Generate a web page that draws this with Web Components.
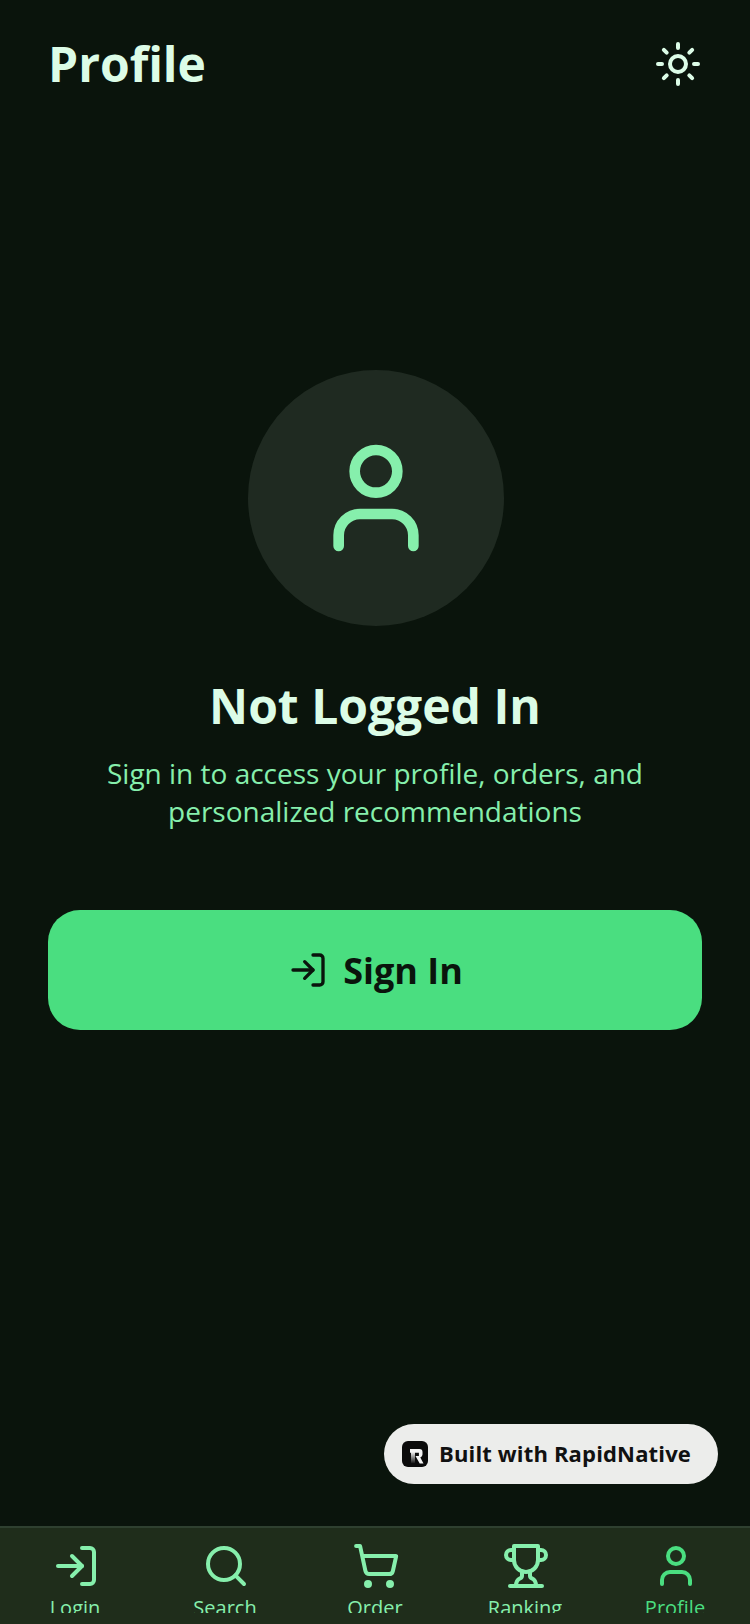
<!DOCTYPE html>
<html lang="en">
<head>
<meta charset="utf-8">
<title>Profile</title>
<style>
  html, body { margin: 0; height: 100%; background: #0a140c; }
  body { font-family: "Open Sans", sans-serif; }
</style>
</head>
<body>
<profile-screen></profile-screen>
<script>
const ICONS = {
  sun: '<circle cx="12" cy="12" r="4"/><path d="M12 2v2M12 20v2M4.93 4.93l1.41 1.41M17.66 17.66l1.41 1.41M2 12h2M20 12h2M6.34 17.66l-1.41 1.41M19.07 4.93l-1.41 1.41"/>',
  user: '<path d="M19 21v-2a4 4 0 0 0-4-4H9a4 4 0 0 0-4 4v2"/><circle cx="12" cy="7" r="4"/>',
  login: '<path d="M15 3h4a2 2 0 0 1 2 2v14a2 2 0 0 1-2 2h-4"/><path d="M10 17l5-5-5-5"/><path d="M15 12H3"/>',
  search: '<circle cx="11" cy="11" r="8"/><path d="M21 21l-4.3-4.3"/>',
  cart: '<circle cx="8" cy="21" r="1"/><circle cx="19" cy="21" r="1"/><path d="M2.05 2.05h2l2.66 12.42a2 2 0 0 0 2 1.58h9.78a2 2 0 0 0 1.95-1.57l1.65-7.43H5.12"/>',
  trophy: '<path d="M6 9H4.5a2.5 2.5 0 0 1 0-5H6"/><path d="M18 9h1.5a2.5 2.5 0 0 0 0-5H18"/><path d="M4 22h16"/><path d="M10 14.66V17c0 .55-.47.98-.97 1.21C7.85 18.75 7 20.24 7 22"/><path d="M14 14.66V17c0 .55.47.98.97 1.21C16.15 18.75 17 20.24 17 22"/><path d="M18 2H6v7a6 6 0 0 0 12 0V2Z"/>'
};

class AppIcon extends HTMLElement {
  connectedCallback() {
    const size = this.getAttribute('size') || 48;
    this.attachShadow({ mode: 'open' });
    this.shadowRoot.innerHTML = `
      <style>
        :host { display: block; width: ${size}px; height: ${size}px; }
        svg { display: block; width: 100%; height: 100%; }
      </style>
      <svg viewBox="0 0 24 24" fill="none" stroke="currentColor" stroke-width="2" stroke-linecap="round" stroke-linejoin="round">${ICONS[this.getAttribute('name')]}</svg>
    `;
  }
}
customElements.define('app-icon', AppIcon);

class TopHeader extends HTMLElement {
  constructor() {
    super();
    this.attachShadow({ mode: 'open' });
    this.shadowRoot.innerHTML = `
      <style>
        :host {
          display: flex;
          justify-content: space-between;
          align-items: center;
          padding: 32px 48px;
          height: 64px;
        }
        h1 { margin: 0; font-size: 48px; line-height: 64px; font-weight: 700; color: #dcfce7; }
        app-icon { color: #dcfce7; }
      </style>
      <h1><slot></slot></h1>
      <app-icon name="sun" size="48"></app-icon>
    `;
  }
}
customElements.define('top-header', TopHeader);

class SignInPanel extends HTMLElement {
  constructor() {
    super();
    this.attachShadow({ mode: 'open' });
    this.shadowRoot.innerHTML = `
      <style>
        :host {
          display: flex;
          flex-direction: column;
          align-items: center;
          padding: 242px 48px 0;
        }
        .avatar {
          width: 256px; height: 256px;
          margin-left: 2px;
          border-radius: 50%;
          background: #1f2a21;
          color: #86efac;
          display: flex; align-items: center; justify-content: center;
        }
        h2 { margin: 48px 0 0; font-size: 48px; line-height: 64px; font-weight: 700; color: #dcfce7; }
        p { margin: 16px 0 0; font-size: 28px; line-height: 38px; color: #86efac; text-align: center; width: 560px; }
        button {
          margin-top: 80px;
          width: 100%; height: 120px;
          border: 0; border-radius: 32px;
          background: #4ade80; color: #0a140c;
          font: 700 36px/48px "Open Sans", sans-serif;
          display: flex; align-items: center; justify-content: center; gap: 16px;
        }
        button app-icon { margin: 0 -1px 0 1px; }
        button span { margin-top: 2px; }
      </style>
      <div class="avatar"><app-icon name="user" size="128"></app-icon></div>
      <h2>Not Logged In</h2>
      <p>Sign in to access your profile, orders, and personalized recommendations</p>
      <button><app-icon name="login" size="40"></app-icon><span>Sign In</span></button>
    `;
  }
}
customElements.define('sign-in-panel', SignInPanel);

class BuiltBadge extends HTMLElement {
  constructor() {
    super();
    this.attachShadow({ mode: 'open' });
    this.shadowRoot.innerHTML = `
      <style>
        :host {
          position: absolute; right: 32px; bottom: 140px;
          display: flex; align-items: center; gap: 11px;
          height: 60px; padding: 0 27px 0 18px; box-sizing: border-box;
          border-radius: 30px;
          background: #ecedeb; color: #111;
          font: 700 22px/32px "Open Sans", sans-serif;
          letter-spacing: .16px;
        }
        svg { display: block; width: 26px; height: 26px; }
        span { margin-bottom: 2px; }
      </style>
      <svg viewBox="0 0 26 26">
        <defs>
          <linearGradient id="stem" x1="0" y1="0" x2="0" y2="1">
            <stop offset="0" stop-color="#f4f4f4"/>
            <stop offset="1" stop-color="#111"/>
          </linearGradient>
        </defs>
        <rect width="26" height="26" rx="6" fill="#0b0b0b"/>
        <path d="M8 8h9.5a3 3 0 0 1 3 3v2.5a3 3 0 0 1-2.2 2.9l3.2 6h-3.8l-4.2-7.4h3.4v-3.2H8z" fill="#f4f4f4"/>
        <path d="M9 11h4v11.4H9z" fill="url(#stem)"/>
      </svg>
      <span>Built with RapidNative</span>
    `;
  }
}
customElements.define('built-badge', BuiltBadge);

class TabItem extends HTMLElement {
  connectedCallback() {
    const color = this.hasAttribute('active') ? '#4ade80' : '#86efac';
    this.attachShadow({ mode: 'open' });
    this.shadowRoot.innerHTML = `
      <style>
        :host {
          flex: 1;
          display: flex; flex-direction: column; align-items: center;
          color: ${color};
        }
        .label { height: 19px; margin-top: 4px; overflow: hidden; font-size: 20px; line-height: 28px; }
        app-icon { margin-left: 2px; }
      </style>
      <app-icon name="${this.getAttribute('icon')}" size="48"></app-icon>
      <div class="label"><slot></slot></div>
    `;
  }
}
customElements.define('tab-item', TabItem);

class TabBar extends HTMLElement {
  constructor() {
    super();
    this.attachShadow({ mode: 'open' });
    this.shadowRoot.innerHTML = `
      <style>
        :host {
          display: flex;
          background: #1f2d1b;
          border-top: 2px solid #2f4030;
          padding-top: 14px;
          height: 82px;
        }
      </style>
      <slot></slot>
    `;
  }
}
customElements.define('tab-bar', TabBar);

class ProfileScreen extends HTMLElement {
  constructor() {
    super();
    this.attachShadow({ mode: 'open' });
    this.shadowRoot.innerHTML = `
      <style>
        :host {
          display: flex; flex-direction: column;
          position: relative;
          height: 1624px; overflow: hidden;
          background: #0a140c;
        }
        .main { flex: 1; }
      </style>
      <top-header>Profile</top-header>
      <div class="main"><sign-in-panel></sign-in-panel></div>
      <built-badge></built-badge>
      <tab-bar>
        <tab-item icon="login">Login</tab-item>
        <tab-item icon="search">Search</tab-item>
        <tab-item icon="cart">Order</tab-item>
        <tab-item icon="trophy">Ranking</tab-item>
        <tab-item icon="user" active>Profile</tab-item>
      </tab-bar>
    `;
  }
}
customElements.define('profile-screen', ProfileScreen);
</script>
</body>
</html>
